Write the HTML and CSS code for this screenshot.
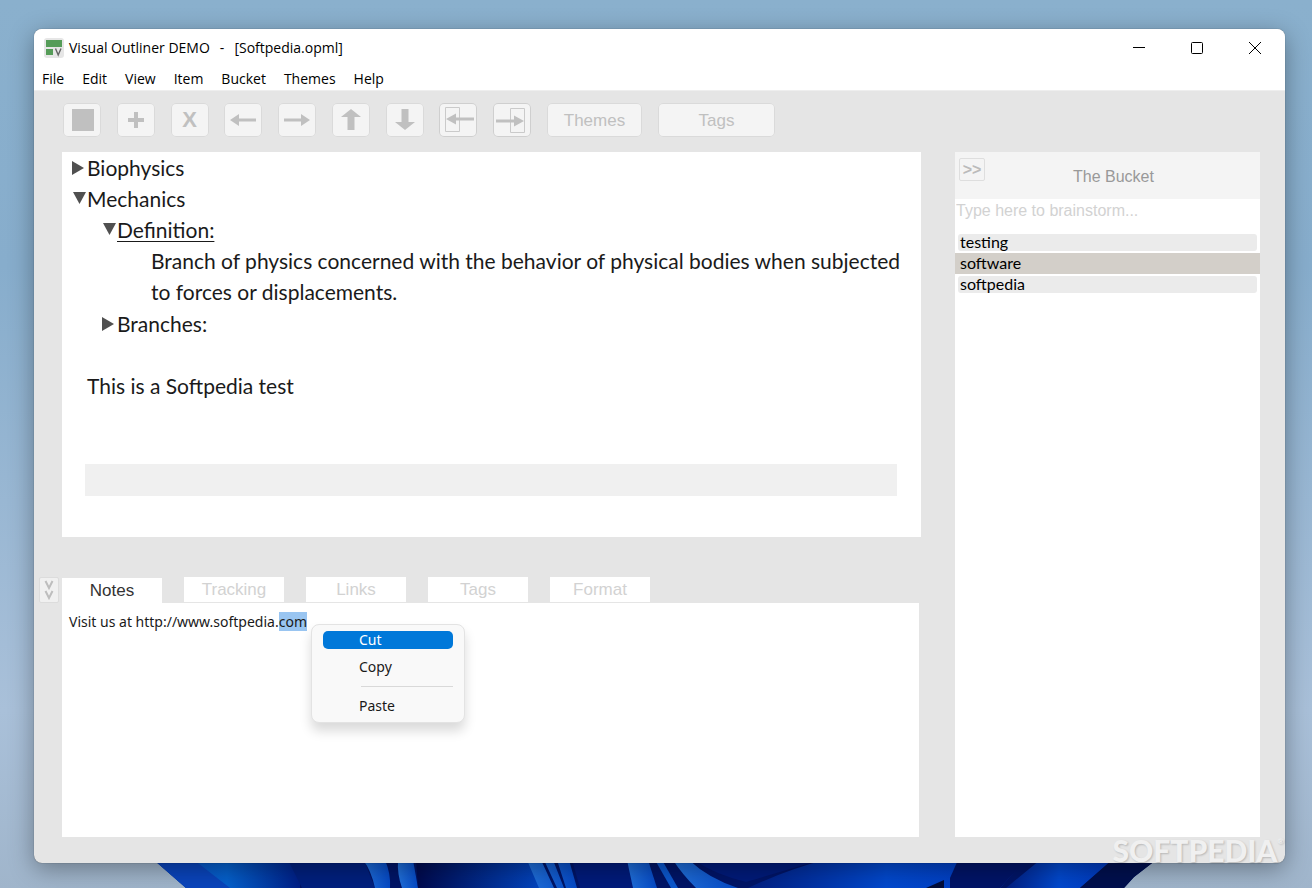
FILE: index.html
```html
<!DOCTYPE html>
<html lang="en">
<head>
  <meta charset="UTF-8">
  <meta name="viewport" content="width=device-width, initial-scale=1.0">
  <title>Visual Outliner DEMO</title>
  <link rel="stylesheet" href="styles.css">
</head>
<body>
  <svg class="wallpaper" viewBox="0 0 1312 28" preserveAspectRatio="none" aria-hidden="true">
    <defs>
      <linearGradient id="petalA" x1="0" x2="1"><stop offset="0" stop-color="#0a4bc4"/><stop offset=".5" stop-color="#0561cd"/><stop offset="1" stop-color="#001f88"/></linearGradient>
      <linearGradient id="petalB" x1="0" x2="1"><stop offset="0" stop-color="#000a4e"/><stop offset="1" stop-color="#0345c0"/></linearGradient>
      <linearGradient id="petalC" x1="0" x2="1"><stop offset="0" stop-color="#021f82"/><stop offset=".5" stop-color="#0249cf"/><stop offset="1" stop-color="#0138bd"/></linearGradient>
      <linearGradient id="fold" x1="0" x2="1"><stop offset="0" stop-color="#2272dc"/><stop offset="1" stop-color="#0549c6"/></linearGradient>
    </defs>
    <path d="M154 0H1156L1134 17 1124 28H186Z" fill="#001568"/>
    <path d="M154 0H300V28H186Z" fill="url(#petalA)"/>
    <path d="M154 0H194L230 28H186Z" fill="#0a45bd"/>
    <path d="M288 0H364L375 28H302Z" fill="#00207f"/>
    <path d="M363 0H385Q391 14 390 28H375Q371 10 363 0Z" fill="url(#fold)"/>
    <path d="M398 0H413L418 28H402Q397 14 398 0Z" fill="url(#fold)"/>
    <path d="M416 0H528L540 28H418Z" fill="url(#petalB)"/>
    <path d="M527 0H541L554 28H539ZM544 0H553L564 28H557ZM557 0H569L577 28H566Z" fill="url(#fold)"/>
    <path d="M572 0H628L634 28H580Z" fill="#001b7c"/>
    <path d="M627 0H648L657 28H633Z" fill="url(#fold)"/>
    <path d="M655 0H662L678 28H671Z" fill="#0c58cf"/>
    <path d="M673 0H689Q708 18 738 28H696Q682 14 673 0Z" fill="url(#fold)"/>
    <path d="M694 0H820L746 22Q714 14 694 0Z" fill="#001b7b"/>
    <path d="M824 0H1025L1000 28H748Q786 10 824 0Z" fill="url(#petalC)"/>
    <path d="M926 28 944 20V28Z" fill="#020d3b"/>
    <path d="M958 0 950 18V28H1000L1026 0Z" fill="#001468"/>
    <path d="M1040 0H1112L1080 28H1006Z" fill="url(#petalC)"/>
    <path d="M1112 0H1156L1134 17 1124 28H1080Z" fill="#00104f"/>
  </svg>

  <div class="window">
    <header class="title-bar">
      <svg class="app-icon" width="20" height="20" viewBox="0 0 20 20" aria-hidden="true">
        <rect x="0" y="0" width="20" height="20" rx="3" fill="#e6e6e6"/>
        <path d="M2 2H18V9H2ZM2 11H9V17H2Z" fill="#559c58"/>
        <path d="M11.500 10.500 14.200 17 17 10.500" fill="none" stroke="#666" stroke-width="1.400"/>
      </svg>
      <h1 class="title"><span>Visual Outliner DEMO</span><span>-</span><span>[Softpedia.opml]</span></h1>
      <div class="window-controls">
        <button aria-label="Minimize"><svg width="12" height="12" viewBox="0 0 12 12"><path d="M0 5.500H12" stroke="#000"/></svg></button>
        <button aria-label="Maximize"><svg width="12" height="12" viewBox="0 0 12 12"><rect x=".5" y=".5" width="11" height="11" rx="1" fill="none" stroke="#000"/></svg></button>
        <button aria-label="Close"><svg width="12" height="12" viewBox="0 0 12 12"><path d="M0 0 12 12M12 0 0 12" stroke="#000"/></svg></button>
      </div>
    </header>

    <nav class="menu-bar">
      <button>File</button>
      <button>Edit</button>
      <button>View</button>
      <button>Item</button>
      <button>Bucket</button>
      <button>Themes</button>
      <button>Help</button>
    </nav>

    <div class="toolbar">
      <div class="tool-icons">
        <button aria-label="Stop"><svg viewBox="0 0 38 34"><path d="M9 6H31V28H9Z"/></svg></button>
        <button aria-label="Add"><svg viewBox="0 0 38 34"><path d="M17 9H21V15H27V19H21V25H17V19H11V15H17Z"/></svg></button>
        <button aria-label="Delete" class="letter">X</button>
        <button aria-label="Move left"><svg viewBox="0 0 38 34"><path d="M6 17 15 11V15.500H32V18.500H15V23Z"/></svg></button>
        <button aria-label="Move right"><svg viewBox="0 0 38 34"><path d="M32 17 23 11V15.500H6V18.500H23V23Z"/></svg></button>
        <button aria-label="Move up"><svg viewBox="0 0 38 34"><path d="M19 6 29 14H22.500V27H15.500V14H9Z"/></svg></button>
        <button aria-label="Move down"><svg viewBox="0 0 38 34"><path d="M19 27 9 19H15.500V6H22.500V19H29Z"/></svg></button>
        <button aria-label="Promote" class="framed"><svg viewBox="0 0 38 34"><path d="M6.500 4.500H20.500V28.500H6.500Z" class="frame"/><path d="M7 16 17 10.500V14.500H35V17.500H17V21.500Z"/></svg></button>
        <button aria-label="Demote" class="framed"><svg viewBox="0 0 38 34"><path d="M17.500 5.500H31.500V29.500H17.500Z" class="frame"/><path d="M31 18 21 12.500V16.500H3V19.500H21V23.500Z"/></svg></button>
      </div>
      <button class="tool-themes">Themes</button>
      <button class="tool-tags">Tags</button>
    </div>

    <main class="workspace">
      <div class="left-column">
        <section class="outline">
          <ul class="tree">
            <li>
              <div class="node"><button class="toggle" aria-label="Expand"><svg width="15" height="14" viewBox="0 0 15 14"><path d="M1 0 13 7 1 14Z"/></svg></button>Biophysics</div>
            </li>
            <li>
              <div class="node"><button class="toggle" aria-label="Collapse"><svg width="15" height="14" viewBox="0 0 15 14"><path d="M2 0H15L8.500 12Z"/></svg></button>Mechanics</div>
              <ul>
                <li>
                  <div class="node"><button class="toggle" aria-label="Collapse"><svg width="15" height="14" viewBox="0 0 15 14"><path d="M2 0H15L8.500 12Z"/></svg></button><u>Definition:</u></div>
                  <p class="leaf">Branch of physics concerned with the behavior of physical bodies when subjected<br>to forces or displacements.</p>
                </li>
                <li>
                  <div class="node"><button class="toggle" aria-label="Expand"><svg width="15" height="14" viewBox="0 0 15 14"><path d="M1 0 13 7 1 14Z"/></svg></button>Branches:</div>
                </li>
              </ul>
            </li>
            <li class="plain">This is a Softpedia test</li>
          </ul>
          <div class="empty-row"></div>
        </section>

        <section class="notes">
          <div class="tabs">
            <button class="collapse" aria-label="Hide notes"><svg width="10" height="20" viewBox="0 0 10 20"><path d="M1.500 1 5 8 8.500 1M1.500 11 5 18 8.500 11"/></svg></button>
            <button class="tab active">Notes</button>
            <button class="tab">Tracking</button>
            <button class="tab">Links</button>
            <button class="tab">Tags</button>
            <button class="tab">Format</button>
          </div>
          <div class="note-pane">
            <p class="note-text">Visit us at http://www.softpedia.<span class="selection">com<span class="context-menu">
              <button class="selected">Cut</button>
              <button>Copy</button>
              <span class="divider"></span>
              <button>Paste</button>
            </span></span></p>
          </div>
        </section>
      </div>

      <aside class="bucket">
        <div class="bucket-header">
          <button class="bucket-hide">&gt;&gt;</button>
          <h2>The Bucket</h2>
        </div>
        <input type="text" class="brainstorm" placeholder="Type here to brainstorm..." aria-label="Type here to brainstorm">
        <ul class="bucket-list">
          <li>testing</li>
          <li class="selected">software</li>
          <li>softpedia</li>
        </ul>
      </aside>
    </main>
  </div>

  <div class="watermark">SOFTPEDIA<small>®</small></div>
</body>
</html>
```

FILE: styles.css
```css
* { box-sizing: border-box; }

body {
  margin: 0;
  min-height: 100vh;
  padding: 29px 27px 25px 34px;
  display: flex;
  position: relative;
  background: linear-gradient(#8ab0cd, #87adcc 30%, #a9c0d9 80%, #a0b5cb);
  font-family: "Open Sans", sans-serif;
  font-size: 14px;
  color: #1a1a1a;
}

button {
  border: none;
  background: none;
  margin: 0;
  padding: 0;
  font: inherit;
  color: inherit;
}

h1, h2, p, ul { margin: 0; padding: 0; font-weight: normal; }
ul { list-style: none; }
svg { display: block; }

.wallpaper {
  position: absolute;
  left: 0;
  bottom: 0;
  width: 100%;
  height: 28px;
}

.window {
  position: relative;
  flex: 1;
  display: flex;
  flex-direction: column;
  background: #e5e5e5;
  border-radius: 8px;
  overflow: hidden;
  box-shadow: 0 0 1px rgba(0, 0, 0, 0.6), 0 6px 24px rgba(0, 0, 0, 0.35);
}

/* title and menu */
.title-bar {
  display: flex;
  align-items: center;
  height: 38px;
  padding: 0 1px 0 10px;
  background: #fff;
}
.title {
  display: flex;
  gap: 10px;
  margin-left: 5px;
  padding-bottom: 2px;
  font-size: 14px;
  color: #000;
}
.window-controls { display: flex; margin-left: auto; }
.window-controls button {
  width: 58px;
  height: 38px;
  display: grid;
  place-items: center;
}

.menu-bar {
  display: flex;
  gap: 18px;
  height: 24px;
  padding: 0 8px;
  background: #fff;
  border-bottom: 1px solid #eee;
  color: #000;
}

/* toolbar */
.toolbar {
  display: flex;
  gap: 16px;
  padding: 12px 29px 15px;
  font-family: "Liberation Sans", sans-serif;
  font-size: 17px;
  color: #c0c0c0;
}
.tool-icons {
  display: flex;
  justify-content: space-between;
  width: 468px;
}
.toolbar button {
  height: 34px;
  border-radius: 5px;
  background: #f4f4f4;
  box-shadow: inset 0 0 0 1px #dadada;
}
.tool-icons button { width: 38px; }
.toolbar svg { fill: #c0c0c0; }
.toolbar .framed { box-shadow: inset 0 0 0 1px #cfcfcf; }
.toolbar .frame { fill: none; stroke: #cacaca; }
.toolbar .letter { font-size: 22px; font-weight: bold; }
.toolbar .tool-themes { width: 95px; padding-top: 2px; }
.toolbar .tool-tags { width: 117px; padding-top: 2px; }

/* outline */
.workspace {
  flex: 1;
  display: grid;
  grid-template-columns: minmax(0, 1fr) 305px;
  gap: 34px;
  padding: 0 25px 26px 28px;
}
.left-column { display: flex; flex-direction: column; }

.outline {
  min-height: 385px;
  padding: 0 24px 41px 9px;
  background: #fff;
  font-family: Lato, sans-serif;
  font-size: 21px;
  line-height: 31px;
  color: #1a1a1a;
}
.tree ul { padding-left: 30px; }
.node { display: flex; align-items: center; }
.node u { text-underline-offset: 3px; text-decoration-thickness: 1px; }
.toggle { width: 16px; }
.toggle svg { fill: #505050; }
.leaf { padding: 0 0 1px 50px; white-space: nowrap; }
.plain { padding: 31px 0 0 16px; }
.empty-row { height: 32px; margin: 63px 0 0 14px; background: #f0f0f0; }

/* notes */
.notes { flex: 1; display: flex; flex-direction: column; margin: 40px 2px 0 0; }
.tabs {
  display: flex;
  gap: 22px;
  margin-left: -23px;
  font-family: "Liberation Sans", sans-serif;
  font-size: 17px;
  color: #d2d2d2;
}
.tab { width: 100px; height: 26px; background: #fff; border-bottom: 1px solid #e5e5e5; }
.tab.active { margin-left: -19px; color: #333; border-top: 1px solid #e5e5e5; border-bottom: none; }
.collapse {
  width: 20px;
  display: grid;
  place-items: center;
  border: 1px solid #dcdcdc;
  border-radius: 2px;
  background: #f0f0f0;
}
.collapse svg { fill: none; stroke: #bdbdbd; stroke-width: 2; }

.note-pane {
  flex: 1;
  padding: 9px 7px;
  background: #fff;
  font-family: "Noto Sans", sans-serif;
}
.note-text { line-height: 19px; }
.selection { position: relative; display: inline-block; background: #99c5f1; }

.context-menu {
  position: absolute;
  top: 12px;
  left: 100%;
  width: 154px;
  margin-left: 4px;
  padding: 6px 11px 7px;
  display: flex;
  flex-direction: column;
  background: #f9f9f9;
  border: 1px solid #e3e3e3;
  border-radius: 8px;
  box-shadow: 0 8px 12px rgba(0, 0, 0, 0.15);
}
.context-menu button { padding-left: 36px; line-height: 18px; text-align: left; border-radius: 5px; }
.context-menu .selected { background: #0078d9; color: #fff; margin-bottom: 9px; }
.context-menu .divider { height: 1px; margin: 10px 0 10px 38px; background: #d9d9d9; }

/* bucket */
.bucket { background: #fff; font-family: "Liberation Sans", sans-serif; font-size: 16px; }
.bucket-header {
  display: grid;
  grid-template-columns: 26px 1fr 14px;
  height: 47px;
  padding: 6px 4px 0;
  background: #f4f4f4;
  color: #999;
}
.bucket-header h2 { font-size: 16px; line-height: 38px; text-align: center; }
.bucket-hide { height: 23px; border: 1px solid #dedede; border-radius: 2px; color: #bbb; font-weight: bold; }
.brainstorm {
  display: block;
  width: 100%;
  height: 24px;
  padding: 0 1px;
  border: none;
  font: inherit;
}
.brainstorm::placeholder { color: #d2d2d2; }
.bucket-list { padding-top: 7px; font-family: Lato, sans-serif; font-size: 16px; line-height: 15px; color: #000; }
.bucket-list li {
  margin: 4px 3px 0;
  padding: 0 2px 2px;
  background: #ebebeb;
  border-radius: 3px;
}
.bucket-list .selected {
  margin: 2px 0 -2px;
  padding: 2px 5px 4px;
  background: #d3cfc9;
  border-radius: 0;
}

.watermark {
  position: absolute;
  right: 28px;
  bottom: 20px;
  display: flex;
  font-family: Lato, sans-serif;
  font-size: 30px;
  line-height: 36px;
  font-weight: 900;
  color: #f0f0f0;
  text-shadow: 1px 1px 2px rgba(0, 0, 0, 0.2);
}
.watermark small { font-size: 8px; line-height: 18px; }
```
